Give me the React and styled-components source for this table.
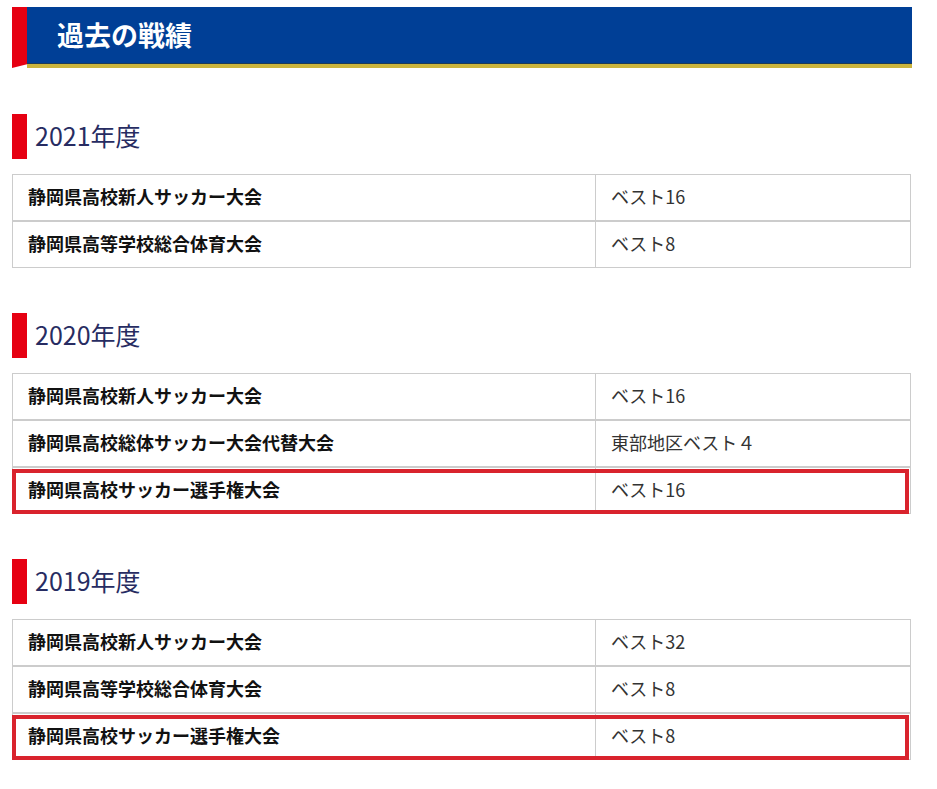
import React from 'react';
import styled, { createGlobalStyle } from 'styled-components';

const records = [
  {
    year: '2021年度',
    rows: [
      { name: '静岡県高校新人サッカー大会', result: 'ベスト16' },
      { name: '静岡県高等学校総合体育大会', result: 'ベスト8' },
    ],
  },
  {
    year: '2020年度',
    rows: [
      { name: '静岡県高校新人サッカー大会', result: 'ベスト16' },
      { name: '静岡県高校総体サッカー大会代替大会', result: '東部地区ベスト４' },
      { name: '静岡県高校サッカー選手権大会', result: 'ベスト16', marked: true },
    ],
  },
  {
    year: '2019年度',
    rows: [
      { name: '静岡県高校新人サッカー大会', result: 'ベスト32' },
      { name: '静岡県高等学校総合体育大会', result: 'ベスト8' },
      { name: '静岡県高校サッカー選手権大会', result: 'ベスト8', marked: true },
    ],
  },
];

const App = () => {
  return (
    <>
      <Global />
      <Page>
        <Banner>
          <BannerMark />
          <BannerBody>
            <BannerTitle>過去の戦績</BannerTitle>
          </BannerBody>
        </Banner>
        {records.map(sec => (
          <Section key={sec.year}>
            <Year>{sec.year}</Year>
            <Table>
              {sec.rows.map(r => (
                <Row key={r.name} marked={r.marked}>
                  <Name>{r.name}</Name>
                  <Result>{r.result}</Result>
                </Row>
              ))}
            </Table>
          </Section>
        ))}
      </Page>
    </>
  );
};

export default App;

const Global = createGlobalStyle`
  body {
    margin: 0;
    background: #fff;
    font-family: "Noto Sans CJK JP", "Noto Sans", sans-serif;
  }
`;

const Page = styled.div`
  width: 900px;
  padding: 7px 0 40px 12px;
`;

const Banner = styled.div`
  display: flex;
  height: 61px;
`;

const BannerMark = styled.div`
  width: 15px;
  background: #e60012;
  clip-path: polygon(0 0, 100% 0, 100% 94%, 0 100%);
`;

const BannerBody = styled.div`
  flex: 1;
  display: flex;
  flex-direction: column;
  background: #003f96;
  border-bottom: 4px solid #cbb43c;
  box-shadow: inset 0 -1px 0 #1f3b55;
`;

const BannerTitle = styled.h1`
  margin: 0;
  height: 57px;
  display: flex;
  align-items: center;
  padding-left: 30px;
  padding-bottom: 2px;
  box-sizing: border-box;
  color: #fff;
  font-size: 27px;
  font-weight: 700;
`;

const Section = styled.section`
  margin-top: 46px;
  & + & {
    margin-top: 45px;
  }
`;

const Year = styled.h2`
  margin: 0 0 15px;
  height: 45px;
  display: flex;
  align-items: center;
  border-left: 15px solid #e60012;
  padding-left: 8px;
  padding-bottom: 3px;
  box-sizing: border-box;
  color: #272c62;
  font-size: 25px;
  font-weight: 400;
`;

const Table = styled.div`
  width: 897px;
  border: 1px solid #cccccc;
`;

const Row = styled.div`
  position: relative;
  display: grid;
  grid-template-columns: 583px 1fr;
  height: 45px;
  & + & {
    border-top: 2px solid #cccccc;
  }
  &::after {
    content: '';
    display: ${p => (p.marked ? 'block' : 'none')};
    position: absolute;
    inset: 1px 1px -1px -1px;
    border: 4px solid #d9232d;
  }
`;

const Name = styled.div`
  display: flex;
  align-items: center;
  padding: 0 0 3px 15px;
  border-right: 1px solid #cccccc;
  color: #111;
  font-size: 18px;
  font-weight: 700;
`;

const Result = styled.div`
  display: flex;
  align-items: center;
  padding: 0 0 3px 15px;
  color: #333;
  font-size: 18px;
`;
